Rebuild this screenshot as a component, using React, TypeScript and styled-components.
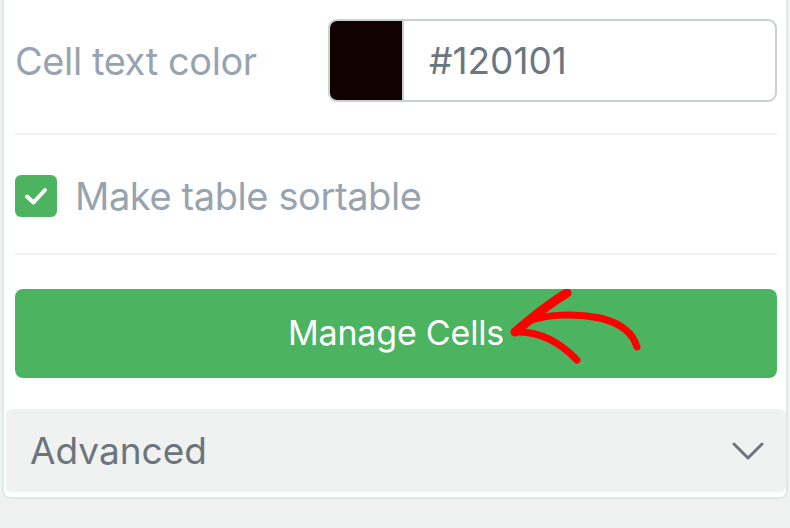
import * as React from "react";
import styled, { createGlobalStyle } from "styled-components";

const GlobalStyle = createGlobalStyle`
  html, body {
    margin: 0;
    padding: 0;
    background: #f0f2f2;
    font-family: Inter, "Open Sans", sans-serif;
  }
`;

const Panel = styled.div`
  margin-left: 2px;
  width: 786px;
  box-sizing: border-box;
  background: #fff;
  border: 2px solid #dfe9e9;
  border-top: 0;
  border-radius: 0 0 8px 8px;
  padding-bottom: 5px;
`;

const Body = styled.div`
  padding: 19px 9px 0 11px;
`;

const Row = styled.div`
  display: flex;
  align-items: center;
  justify-content: space-between;
  height: 83px;
`;

const Label = styled.label`
  font-size: 38px;
  color: #97a4af;
  letter-spacing: -0.4px;
`;

const ColorField = styled.div`
  display: flex;
  width: 449px;
  height: 83px;
  box-sizing: border-box;
  border: 2px solid #c8cfd5;
  border-radius: 9px;
  overflow: hidden;
`;

const Swatch = styled.div<{ $color: string }>`
  width: 72px;
  background: ${(p) => p.$color};
  border-right: 2px solid #c8cfd5;
`;

const HexInput = styled.div`
  flex: 1;
  display: flex;
  align-items: center;
  padding-left: 25px;
  font-size: 37px;
  color: #6c7680;
`;

const Divider = styled.hr<{ $top: number; $bottom: number }>`
  border: 0;
  height: 2px;
  background: #f0f1f2;
  margin: ${(p) => p.$top}px 0 ${(p) => p.$bottom}px;
`;

const CheckRow = styled.div`
  display: flex;
  align-items: center;
  gap: 18px;
  height: 42px;
`;

const Box = styled.span`
  width: 42px;
  height: 42px;
  border-radius: 6px;
  background: #4cb461;
  display: flex;
  align-items: center;
  justify-content: center;
`;

const ButtonWrap = styled.div`
  position: relative;
`;

const Button = styled.button`
  display: flex;
  align-items: center;
  justify-content: center;
  width: 100%;
  height: 89px;
  border: 0;
  border-radius: 8px;
  background: #4cb461;
  color: #fff;
  font-family: inherit;
  font-size: 34px;
  letter-spacing: -0.2px;
  padding: 0 0 2px;
`;

const Arrow = styled.svg`
  position: absolute;
  left: 0;
  top: 0;
  pointer-events: none;
`;

const Advanced = styled.div`
  margin: 31px 0 0 2px;
  height: 83px;
  border-radius: 6px;
  background: #f0f2f2;
  display: flex;
  align-items: center;
  justify-content: space-between;
  padding: 0 22px 0 24px;
  font-size: 37px;
  color: #6c757d;
`;

export default function App() {
  return (
    <>
      <GlobalStyle />
      <Panel>
        <Body>
          <Row>
            <Label>Cell text color</Label>
            <ColorField>
              <Swatch $color="#120101" />
              <HexInput>#120101</HexInput>
            </ColorField>
          </Row>
          <Divider $top={31} $bottom={40} />
          <CheckRow>
            <Box>
              <svg width="24" height="20" viewBox="0 0 24 20">
                <path d="M3 10.5 L9.5 16.5 L21 4" fill="none" stroke="#fff" strokeWidth="4" strokeLinecap="round" strokeLinejoin="round" />
              </svg>
            </Box>
            <Label>Make table sortable</Label>
          </CheckRow>
          <Divider $top={36} $bottom={34} />
          <ButtonWrap>
            <Button>Manage Cells</Button>
            <Arrow width="762" height="89" viewBox="0 0 762 89">
              <g transform="translate(-15,-289)" fill="none" stroke="#ff0000" strokeLinecap="round" strokeLinejoin="round">
                <path d="M567 293 C550 303 535 315 515 332" strokeWidth="9" />
                <path d="M515 332 C535 331 556 338 577 360" strokeWidth="7" />
                <path d="M527 322 C545 314 575 313 600 318 C620 323 633 333 637 347" strokeWidth="7" />
              </g>
            </Arrow>
          </ButtonWrap>
        </Body>
        <Advanced>
          <span>Advanced</span>
          <svg width="32" height="20" viewBox="0 0 32 20">
            <path d="M2 3 L16 17 L30 3" fill="none" stroke="#6c757d" strokeWidth="3" strokeLinecap="round" strokeLinejoin="round" />
          </svg>
        </Advanced>
      </Panel>
    </>
  );
}
